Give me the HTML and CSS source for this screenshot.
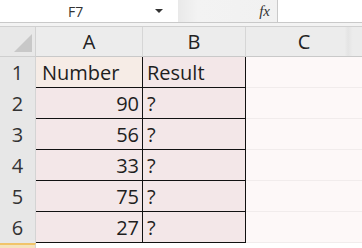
FILE: index.html
```html
<!DOCTYPE html>
<html lang="en">
<head>
    <meta charset="UTF-8">
    <title>Sheet</title>
    <link rel="stylesheet" href="styles.css">
</head>
<body>
    <div class="formula-bar">
        <div class="name-box">
            <span class="cell-ref">F7</span>
            <span class="arrow"></span>
        </div>
        <div class="fx-box"><span class="fx">fx</span></div>
        <div class="formula-input"></div>
    </div>
    <div class="bar-gap"></div>
    <div class="sheet">
        <div class="corner"><span class="corner-tri"></span></div>
        <div class="col-head">A</div>
        <div class="col-head">B</div>
        <div class="col-head last">C</div>

        <div class="row-head">1</div>
        <div class="cell head-cell">Number</div>
        <div class="cell">Result</div>
        <div class="cell empty"></div>

        <div class="row-head">2</div>
        <div class="cell num">90</div>
        <div class="cell">?</div>
        <div class="cell empty"></div>

        <div class="row-head">3</div>
        <div class="cell num">56</div>
        <div class="cell">?</div>
        <div class="cell empty"></div>

        <div class="row-head">4</div>
        <div class="cell num">33</div>
        <div class="cell">?</div>
        <div class="cell empty"></div>

        <div class="row-head">5</div>
        <div class="cell num">75</div>
        <div class="cell">?</div>
        <div class="cell empty"></div>

        <div class="row-head">6</div>
        <div class="cell num">27</div>
        <div class="cell">?</div>
        <div class="cell empty"></div>

        <div class="row-head selected"></div>
        <div class="cell blank"></div>
        <div class="cell blank"></div>
        <div class="cell empty blank"></div>
    </div>
</body>
</html>
```

FILE: styles.css
```css
body {
    margin: 0;
    width: 362px;
    height: 248px;
    overflow: hidden;
    background: #fff;
    font-family: "Open Sans", "Liberation Sans", sans-serif;
    color: #1e1e1e;
}

.formula-bar {
    display: flex;
    height: 22px;
    border-bottom: 1px solid #c9c9c9;
    background: #fff;
}

.name-box {
    width: 178px;
    display: flex;
    align-items: center;
}

.cell-ref {
    margin-left: 68px;
    font-size: 14px;
    color: #333;
}

.arrow {
    margin-left: 72px;
    width: 0;
    height: 0;
    border-left: 4px solid transparent;
    border-right: 4px solid transparent;
    border-top: 4px solid #333;
}

.fx-box {
    width: 99px;
    border-right: 1px solid #c9c9c9;
    background: linear-gradient(to right, #e9e9e9, #f3f3f3 20%, #f1f1f1);
    display: flex;
    align-items: center;
    justify-content: flex-end;
}

.fx {
    font-family: "Liberation Serif", serif;
    font-style: italic;
    font-size: 15px;
    margin-right: 7px;
    color: #333;
}

.formula-input {
    flex: 1;
}

.bar-gap {
    height: 3px;
    background: #f3f3f3;
    border-bottom: 1px solid #d0d0d0;
}

.sheet {
    display: grid;
    grid-template-columns: 36px 107px 103px 1fr;
    grid-template-rows: 30px repeat(6, 31px) 1fr;
    height: 221px;
}

.corner {
    background: #e8e8e8;
    border-right: 1px solid #d2d2d2;
    border-bottom: 1px solid #cfcfcf;
    position: relative;
}

.corner-tri {
    position: absolute;
    right: 3px;
    bottom: 4px;
    width: 0;
    height: 0;
    border-left: 18px solid transparent;
    border-bottom: 18px solid #c8c8c8;
}

.col-head {
    background: #ececec;
    border-right: 1px solid #d6d6d6;
    border-bottom: 1px solid #c9c9c9;
    display: flex;
    align-items: center;
    justify-content: center;
    font-size: 20px;
    color: #222;
}

.col-head.last {
    border-right: none;
    background: linear-gradient(to right, #ececec 85%, #e4e4e4 88%, #ececec 92%);
}

.row-head {
    background: #e7e7e7;
    border-right: 1px solid #d4d4d4;
    display: flex;
    align-items: center;
    justify-content: center;
    font-size: 20px;
    color: #333;
}

.row-head.selected {
    border-top: 2px solid #f1c46a;
    background: #f5e3bd;
}

.cell {
    background: #f3e7e8;
    border-right: 1px solid #111;
    border-bottom: 1px solid #111;
    display: flex;
    align-items: center;
    padding: 1px 3px 0 4px;
    font-size: 20px;
    white-space: nowrap;
}

.head-cell {
    background: #f6ece6;
    padding-left: 6px;
}

.num {
    justify-content: flex-end;
}

.empty {
    background: #fdf8f8;
    border-right: none;
    border-bottom: 1px solid #f1ecec;
}

.blank {
    background: #fff;
    border-right: none;
    border-bottom: none;
}
```
